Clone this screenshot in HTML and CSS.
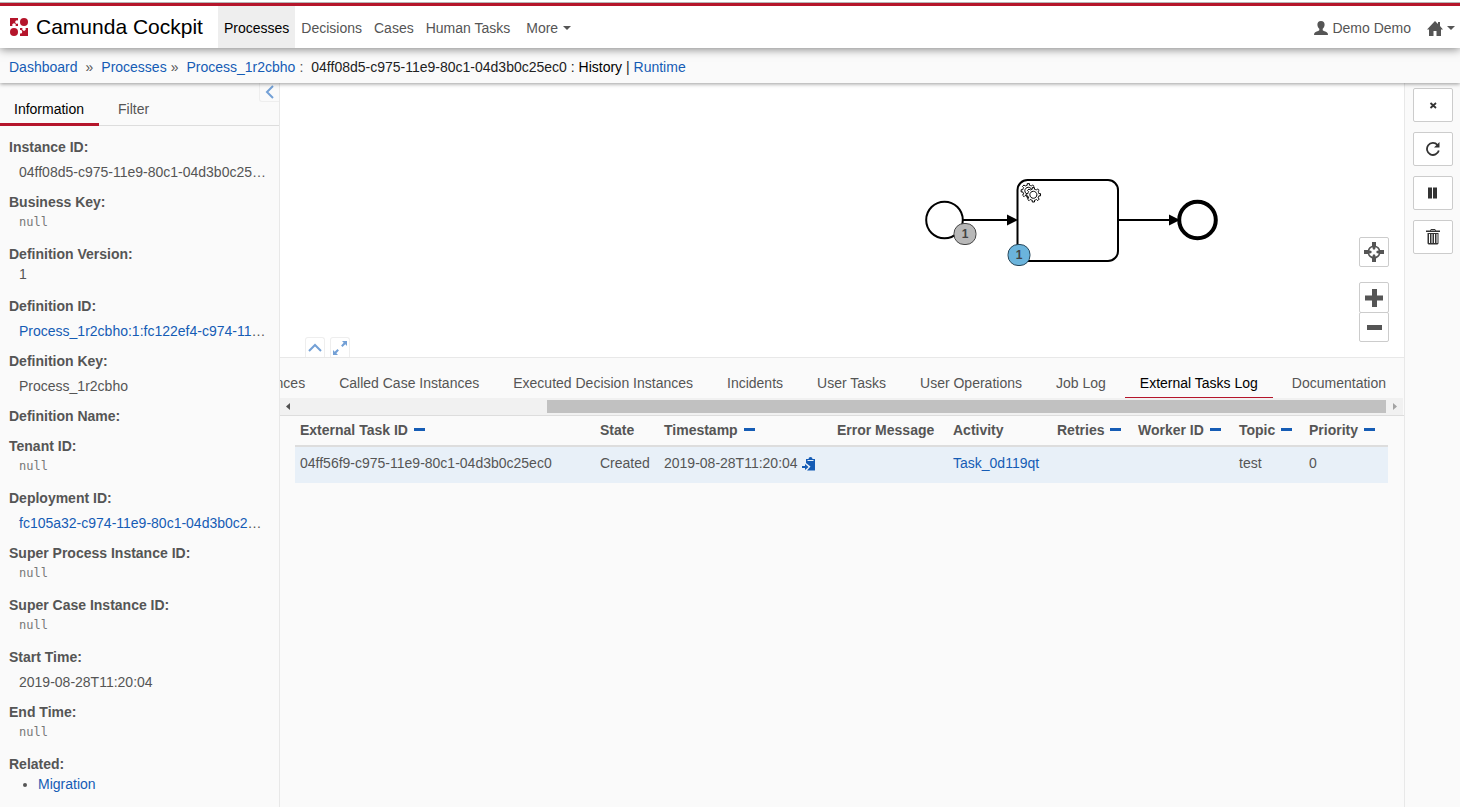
FILE: index.html
```html
<!DOCTYPE html>
<html lang="en">
<head>
<meta charset="utf-8">
<title>Camunda Cockpit</title>
<link rel="stylesheet" href="styles.css">
</head>
<body>
<header class="topbar">
  <a class="brand" href="#">
    <svg class="logo" width="18" height="18" viewBox="0 0 18 18" aria-hidden="true">
      <path d="M0 0h8v2.500a1.800 1.800 0 1 0 0 3V8H5.500a1.800 1.800 0 1 0-3 0H0z"/>
      <path d="M10 18v-2.500a1.800 1.800 0 1 0 0-3.500V10h2.500a1.800 1.800 0 1 0 3 0H18v8z"/>
      <circle cx="14" cy="4" r="4"/><circle cx="4" cy="14" r="4"/>
    </svg>
    <span>Camunda Cockpit</span>
  </a>
  <nav class="sections">
    <a class="section active" href="#">Processes</a>
    <a class="section" href="#">Decisions</a>
    <a class="section" href="#">Cases</a>
    <a class="section" href="#">Human Tasks</a>
    <button class="section more" type="button">More <span class="caret"></span></button>
  </nav>
  <div class="account">
    <button class="account-item" type="button">
      <svg width="14" height="14" viewBox="0 0 14 14" aria-hidden="true"><path d="M7 0C4.600 0 3.300 1.500 3.400 3.800c.1 1.800.8 3 1.900 3.900v1.600C4.300 10.300 1 10.800.3 12.200L0 14h14l-.3-1.800C13 10.800 9.700 10.300 8.700 9.300V7.700c1.100-.9 1.800-2.100 1.900-3.900C10.700 1.500 9.400 0 7 0z"/></svg>
      <span>Demo Demo</span>
    </button>
    <button class="account-item" type="button" aria-label="Applications">
      <svg width="16" height="15" viewBox="0 0 16 15" aria-hidden="true"><path d="M8 0l3 3V1h2v4l3 3.500h-2V15H9.500v-5h-3v5H2V8.500H0z"/></svg>
      <span class="caret"></span>
    </button>
  </div>
</header>

<nav class="breadcrumbs" aria-label="Breadcrumb">
  <a href="#">Dashboard</a><span class="sep wide">»</span><a href="#">Processes</a><span class="sep">»</span><a href="#">Process_1r2cbho</a><span class="colon">:</span><span class="current">04ff08d5-c975-11e9-80c1-04d3b0c25ec0 : <span class="view">History</span> | <a href="#">Runtime</a></span>
</nav>

<div class="workspace">
  <aside class="sidebar">
    <button class="collapse left" type="button" aria-label="Collapse sidebar">
      <svg width="10" height="14" viewBox="0 0 10 14"><path d="M8 1L2 7l6 6"/></svg>
    </button>
    <div class="side-tabs">
      <a class="side-tab active" href="#">Information</a>
      <a class="side-tab" href="#">Filter</a>
    </div>
    <dl class="facts">
      <dt>Instance ID:</dt><dd class="copyable">04ff08d5-c975-11e9-80c1-04d3b0c25ec0</dd>
      <dt>Business Key:</dt><dd><code>null</code></dd>
      <dt>Definition Version:</dt><dd>1</dd>
      <dt>Definition ID:</dt><dd class="copyable"><a href="#">Process_1r2cbho:1:fc122ef4-c974-11e9-80c1-04d3b0c25ec0</a></dd>
      <dt>Definition Key:</dt><dd class="copyable">Process_1r2cbho</dd>
      <dt>Definition Name:</dt><dd class="empty"></dd>
      <dt>Tenant ID:</dt><dd><code>null</code></dd>
      <dt>Deployment ID:</dt><dd class="copyable"><a href="#">fc105a32-c974-11e9-80c1-04d3b0c25ec0</a></dd>
      <dt>Super Process Instance ID:</dt><dd><code>null</code></dd>
      <dt>Super Case Instance ID:</dt><dd><code>null</code></dd>
      <dt>Start Time:</dt><dd class="copyable">2019-08-28T11:20:04</dd>
      <dt>End Time:</dt><dd><code>null</code></dd>
      <dt>Related:</dt><dd><ul class="related"><li><a href="#">Migration</a></li></ul></dd>
    </dl>
  </aside>

  <main class="content">
    <section class="canvas" aria-label="Process diagram">
      <svg class="diagram" width="320" height="110" viewBox="0 0 320 110">
        <defs>
          <path id="gear" d="m 0,0 v -1.71335 c 0.352326,-0.0705 0.703932,-0.17838 1.047628,-0.32133 0.344416,-0.14465 0.665822,-0.32133 0.966377,-0.52145 l 1.19431,1.18005 1.567487,-1.57688 -1.195028,-1.18014 c 0.403376,-0.61394 0.683079,-1.29908 0.825447,-2.01824 l 1.622133,-0.01 v -2.2196 l -1.636514,0.01 c -0.07333,-0.35153 -0.178319,-0.70024 -0.323564,-1.04372 -0.145244,-0.34406 -0.321407,-0.6644 -0.522735,-0.96217 l 1.131035,-1.13631 -1.583305,-1.56293 -1.129598,1.13589 c -0.614052,-0.40108 -1.302883,-0.68093 -2.022633,-0.82247 l 0.0093,-1.61852 h -2.241173 l 0.0042,1.63124 c -0.353763,0.0736 -0.705369,0.17977 -1.049785,0.32371 -0.344415,0.14437 -0.665102,0.32092 -0.9635006,0.52006 l -1.1698628,-1.15823 -1.5667691,1.5792 1.1684265,1.15669 c -0.4026573,0.61283 -0.68308,1.29797 -0.8247287,2.01713 l -1.6588041,0.003 v 2.22174 l 1.6724648,-0.006 c 0.073327,0.35077 0.1797598,0.70243 0.3242851,1.04472 0.1452428,0.34448 0.3214064,0.6644 0.5227339,0.96066 l -1.1993431,1.19723 1.5840256,1.56011 1.1964668,-1.19348 c 0.6140517,0.40346 1.3028827,0.68232 2.0233517,0.82331 l 7.19e-4,1.69892 h 2.226848 z m 0.221462,-3.9957 c -1.788948,0.7502 -3.8576,-0.0928 -4.6097055,-1.87438 -0.7521065,-1.78321 0.090598,-3.84627 1.8802645,-4.59604 1.78823,-0.74936 3.856881,0.0929 4.608987,1.87437 0.752106,1.78165 -0.0906,3.84612 -1.879546,4.59605 z"/>
        </defs>
        <circle class="shape" cx="34.500" cy="55" r="18.300"/>
        <path class="flow" d="M53 55h46M208 55h54"/>
        <rect class="shape" x="107.500" y="15" width="100.500" height="81" rx="10"/>
        <path class="arrow" d="M97 49.500l11 5.500-11 5.500zM259 49.500l11 5.500-11 5.500z"/>
        <circle class="shape end" cx="287.500" cy="55" r="18.300"/>
        <use class="gear" href="#gear" x="119.500" y="33"/>
        <circle fill="#fff" cx="123.500" cy="29" r="5"/>
        <use class="gear" href="#gear" x="124.500" y="37"/>
        <rect class="badge past" x="44" y="58.500" width="22" height="21" rx="10"/>
        <text class="count" x="55" y="73">1</text>
        <rect class="badge running" x="98" y="79.500" width="22" height="21" rx="10"/>
        <text class="count" x="109" y="94">1</text>
      </svg>
      <div class="zoom">
        <button class="zoom-btn reset" type="button" aria-label="Reset zoom">
          <svg width="20" height="20" viewBox="0 0 20 20"><circle cx="10" cy="10" r="5.800" fill="none" stroke="#555" stroke-width="1.500"/><path d="M8 0h4v4l-1 3.500H9L8 4zM8 20v-4l1-3.500h2l1 3.500v4zM0 8h4l3.500 1v2L4 12H0zM20 8h-4l-3.500 1v2l3.500 1h4z"/></svg>
        </button>
        <button class="zoom-btn" type="button" aria-label="Zoom in">
          <svg width="20" height="20" viewBox="0 0 20 20"><path d="M8 1h5v6.500h6v5h-6V19H8v-6.500H1v-5h7z"/></svg>
        </button>
        <button class="zoom-btn out" type="button" aria-label="Zoom out">
          <svg width="20" height="20" viewBox="0 0 20 20"><path d="M3 8h15v5H3z"/></svg>
        </button>
      </div>
      <div class="pane-toggles">
        <button class="collapse" type="button" aria-label="Collapse diagram">
          <svg width="14" height="10" viewBox="0 0 14 10"><path d="M1 8L7 2l6 6"/></svg>
        </button>
        <button class="collapse" type="button" aria-label="Maximize">
          <svg width="16" height="16" viewBox="0 0 16 16"><path class="solid" d="M10 1h5v5l-1.700-1.700-2.800 2.600-1.400-1.400 2.600-2.800zM6 15H1v-5l1.700 1.700 2.800-2.600 1.400 1.400-2.600 2.800z"/></svg>
        </button>
      </div>
    </section>

    <section class="details">
      <nav class="tabs">
        <a class="tab" href="#">Called Process Instances</a>
        <a class="tab" href="#">Called Case Instances</a>
        <a class="tab" href="#">Executed Decision Instances</a>
        <a class="tab" href="#">Incidents</a>
        <a class="tab" href="#">User Tasks</a>
        <a class="tab" href="#">User Operations</a>
        <a class="tab" href="#">Job Log</a>
        <a class="tab active" href="#">External Tasks Log</a>
        <a class="tab" href="#">Documentation</a>
      </nav>
      <div class="scrollbar" aria-hidden="true">
        <svg width="17" height="17" viewBox="0 0 17 17"><path fill="#505050" d="M10 5v7L6 8.500z"/></svg>
        <div class="track"><div class="thumb"></div></div>
        <svg width="17" height="17" viewBox="0 0 17 17"><path fill="#a3a3a3" d="M7 5v7l4-3.500z"/></svg>
      </div>
      <div class="table-wrap">
        <table class="log">
          <colgroup><col class="c-id"><col class="c-state"><col class="c-time"><col class="c-error"><col class="c-activity"><col class="c-retries"><col class="c-worker"><col class="c-topic"><col class="c-priority"></colgroup>
          <thead>
            <tr>
              <th>External Task ID <span class="sort"></span></th>
              <th>State</th>
              <th>Timestamp <span class="sort"></span></th>
              <th>Error Message</th>
              <th>Activity</th>
              <th>Retries <span class="sort"></span></th>
              <th>Worker ID <span class="sort"></span></th>
              <th>Topic <span class="sort"></span></th>
              <th>Priority <span class="sort"></span></th>
            </tr>
          </thead>
          <tbody>
            <tr>
              <td>04ff56f9-c975-11e9-80c1-04d3b0c25ec0</td>
              <td>Created</td>
              <td>2019-08-28T11:20:04 <svg class="paste" width="14" height="14" viewBox="0 0 14 14" aria-hidden="true"><path fill="#155cb5" d="M4 2h2.500a2 2 0 0 1 4 0H13v11.500H5l3.500-4L4 6z"/><path fill="#e8f0f8" d="M5.500 3h6v1h-6z"/><path fill="#155cb5" d="M0 9h3V7l3.500 3L3 13v-2H0z"/></svg></td>
              <td></td>
              <td><a href="#">Task_0d119qt</a></td>
              <td></td>
              <td></td>
              <td>test</td>
              <td>0</td>
            </tr>
          </tbody>
        </table>
      </div>
    </section>
  </main>

  <aside class="actions">
    <button class="action" type="button" aria-label="Cancel">
      <svg width="14" height="14" viewBox="0 0 14 14"><path d="M4.500 5l5.500 5M10 5l-5.500 5" stroke="#333" stroke-width="1.800"/></svg>
    </button>
    <button class="action" type="button" aria-label="Refresh">
      <svg width="14" height="14" viewBox="0 0 14 14"><path d="M11.500 3A6 6 0 1 0 12.800 8.500" fill="none" stroke="#333" stroke-width="1.800"/><path d="M13.500 0v5.500H8z"/></svg>
    </button>
    <button class="action" type="button" aria-label="Suspend">
      <svg width="14" height="14" viewBox="0 0 14 14"><path d="M2 1.500h4v11H2zM7 1.500h4v11H7z"/></svg>
    </button>
    <button class="action" type="button" aria-label="Delete">
      <svg width="14" height="16" viewBox="0 0 14 16"><path d="M4 1.500L5 0h4l1 1.500h4V3H0V1.500zM5 1v.5h4V1z" fill-rule="evenodd"/><path d="M1.500 4h11v10.500l-1 1h-9l-1-1zM3 5v9h1V5zM5.500 5v9h1V5zM8 5v9h1V5zM10.500 5v9h1V5z" fill-rule="evenodd"/></svg>
    </button>
  </aside>
</div>
</body>
</html>
```
FILE: styles.css
```css
* { box-sizing: border-box; }

body {
  margin: 0;
  min-height: 100vh;
  display: flex;
  flex-direction: column;
  background: #fafafa;
  color: #555;
  font: 14px/20px "Liberation Sans", Arial, sans-serif;
}

a { color: #155cb5; text-decoration: none; }
button { font: inherit; color: inherit; cursor: pointer; }

/* Header */
.topbar {
  position: relative;
  z-index: 3;
  display: flex;
  height: 48px;
  flex: none;
  border-top: 2px solid #fff;
  background: linear-gradient(#b5b5b5 1px, #b5152b 1px, #b5152b 4px, #fff 4px);
  box-shadow: 0 1px 9px rgba(0, 0, 0, 0.5);
  padding-top: 4px;
}

.brand {
  display: flex;
  align-items: center;
  gap: 8px;
  padding: 0 15px 0 10px;
  color: #000;
  font-size: 21px;
}
.logo { fill: #b5152b; }

.sections, .account { display: flex; }
.section {
  display: flex;
  align-items: center;
  padding: 2px 6px 0;
  border: 0;
  background: none;
  color: #555;
}
.section.active { background: #eee; color: #000; }
.section.more { padding-left: 10px; gap: 5px; }

.caret {
  border: 4px solid transparent;
  border-top-color: #555;
  border-bottom: 0;
}

.account { margin-left: auto; padding-right: 5px; gap: 16px; }
.account-item {
  display: flex;
  align-items: center;
  gap: 4px;
  padding: 2px 0 0;
  border: 0;
  background: none;
  fill: #555;
}

/* Breadcrumbs */
.breadcrumbs {
  position: relative;
  z-index: 2;
  display: flex;
  flex: none;
  align-items: center;
  height: 35px;
  padding: 2px 9px 0;
  background: #fafafa;
  box-shadow: 0 1px 4px rgba(0, 0, 0, 0.4);
}
.sep { padding: 0 8px 0 4px; }
.sep.wide { padding-left: 8px; }
.colon { padding: 0 8px 0 4px; }
.current { color: #222; }
.view { color: #000; }

/* Page columns */
.workspace { display: flex; flex: 1; }
.sidebar {
  position: relative;
  flex: none;
  width: 280px;
  border-right: 1px solid #e8e8e8;
}
.content {
  display: flex;
  flex: 1;
  flex-direction: column;
  min-width: 0;
}
.actions {
  display: flex;
  flex: none;
  flex-direction: column;
  gap: 10px;
  padding: 5px 7px 0 8px;
  border-left: 1px solid #e8e8e8;
}

.collapse {
  display: flex;
  align-items: center;
  justify-content: center;
  width: 20px;
  height: 20px;
  padding: 0;
  border: 1px solid #eee;
  border-bottom: 0;
  border-radius: 3px 3px 0 0;
  background: none;
}
.collapse path { fill: none; stroke: #73a0d6; stroke-width: 2; }
.collapse .solid { fill: #73a0d6; stroke: none; }
.collapse.left {
  position: absolute;
  top: -1px;
  right: 0;
  border-right: 0;
  border-bottom: 1px solid #eee;
  border-radius: 0 0 0 3px;
}

.side-tabs {
  display: flex;
  gap: 5px;
  padding-top: 11px;
  border-bottom: 1px solid #ddd;
}
.side-tab {
  padding: 5px 15px 4px 14px;
  border-bottom: 3px solid transparent;
  margin-bottom: -1px;
  color: #555;
}
.side-tab.active { color: #000; border-color: #b5152b; }

.facts { margin: 0; padding: 11px 12px 10px 9px; }
.facts dt { font-weight: bold; }
.facts dd {
  margin: 0 0 12px;
  padding-left: 10px;
  overflow: hidden;
  text-overflow: ellipsis;
  white-space: nowrap;
}
.facts .copyable { margin-bottom: 5px; line-height: 30px; }
.facts .empty { margin-bottom: 10px; }
.facts code {
  display: block;
  color: #777;
  font: 12px/20px "DejaVu Sans Mono", monospace;
}
.related { margin: 0; padding: 0 0 0 19px; }

/* Diagram */
.canvas {
  position: relative;
  flex: none;
  height: 274px;
  background: #fff;
}
.diagram { position: absolute; top: 82px; right: 174px; }
.shape { fill: #fff; stroke: #000; stroke-width: 2; }
.shape.end { stroke-width: 4; }
.flow { stroke: #000; stroke-width: 2; }
.gear { fill: #fff; stroke: #000; }
.badge { stroke: #444; }
.badge.past { fill: #b8b8b8; }
.badge.running { fill: #6bb4dc; stroke: #25465a; }
.count { fill: #444; font-size: 12px; font-weight: bold; text-anchor: middle; }

.zoom { position: absolute; right: 15px; bottom: 15px; display: flex; flex-direction: column; }
.zoom-btn {
  display: flex;
  align-items: center;
  justify-content: center;
  width: 30px;
  height: 31px;
  padding: 0;
  border: 1px solid #ccc;
  border-radius: 2px;
  background: #fff;
  fill: #555;
}
.zoom-btn.reset { height: 30px; margin-bottom: 15px; }
.zoom-btn.out { height: 30px; margin-top: -1px; }
.pane-toggles { position: absolute; left: 25px; bottom: 0; display: flex; gap: 5px; }

/* Details pane */
.details { border-top: 1px solid #e8e8e8; }
.tabs {
  display: flex;
  justify-content: flex-end;
  gap: 4px;
  padding: 10px 3px 0 0;
  overflow: hidden;
}
.tab {
  flex: none;
  padding: 5px 15px 4px;
  border-bottom: 1px solid transparent;
  color: #555;
}
.tab.active { color: #000; border-color: #b5152b; }
.scrollbar {
  display: flex;
  height: 17px;
  margin-right: 1px;
  background: #f1f1f1;
}
.track { display: flex; flex: 1; justify-content: flex-end; padding: 2px 0; }
.thumb { width: 77%; background: #c1c1c1; }

.table-wrap { padding: 4px 16px 0 15px; border-top: 1px solid #ddd; }
.log { width: 100%; table-layout: fixed; border-collapse: collapse; }
.log th, .log td { text-align: left; white-space: nowrap; }
.log th { padding: 0 5px 5px; border-bottom: 2px solid #ddd; }
.log td { padding: 6px 5px 10px; background: #e8f0f8; }
.sort {
  display: inline-block;
  width: 11px;
  height: 3px;
  margin-left: 2px;
  vertical-align: 4px;
  background: #155cb5;
}
.paste { vertical-align: -3px; }
.c-id { width: 300px; }
.c-state { width: 64px; }
.c-time { width: 173px; }
.c-error { width: 116px; }
.c-activity { width: 104px; }
.c-retries { width: 81px; }
.c-worker { width: 101px; }
.c-topic { width: 70px; }
.c-priority { width: 84px; }

/* Instance actions */
.action {
  display: flex;
  align-items: center;
  justify-content: center;
  width: 40px;
  height: 34px;
  padding: 0;
  border: 1px solid #ccc;
  border-radius: 2px;
  background: #fff;
  fill: #333;
}
```
